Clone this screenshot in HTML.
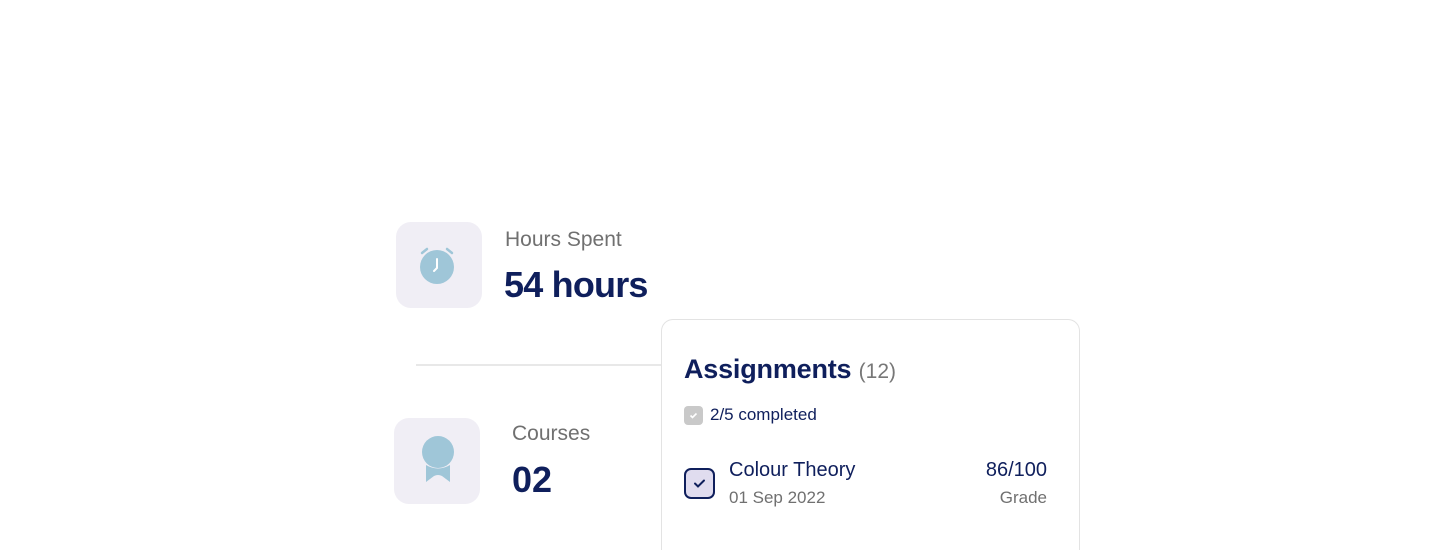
<!DOCTYPE html>
<html><head><style>
*{margin:0;padding:0;box-sizing:border-box}
html,body{width:1440px;height:550px;overflow:hidden}
body{background:#fff;position:relative;font-family:"Liberation Sans",sans-serif}
.a{position:absolute;white-space:nowrap}
.box{position:absolute;width:86px;height:86px;background:#f0eef5;border-radius:15px}
.navy{color:#0f1f5c}
.gray{color:#707070}
</style></head><body>
<div class="box" style="left:396px;top:222px">
<svg width="86" height="86" viewBox="0 0 86 86">
<circle cx="41" cy="45" r="17" fill="#9fc6d8"/>
<path d="M26 31 L31 27 M56 31 L51 27" stroke="#9fc6d8" stroke-width="2.5" stroke-linecap="round"/>
<path d="M41 37 V46 L38 49" stroke="#fff" stroke-width="2" fill="none" stroke-linecap="round"/>
</svg></div>
<div class="a gray" style="left:505px;top:228px;font-size:21px">Hours Spent</div>
<div class="a navy" style="left:504px;top:264px;font-size:36px;font-weight:bold;letter-spacing:-0.8px">54 hours</div>
<div class="a" style="left:416px;top:364px;width:245px;height:2px;background:#e8e8e8"></div>
<div class="box" style="left:394px;top:418px">
<svg width="86" height="86" viewBox="0 0 86 86">
<circle cx="44" cy="34" r="16" fill="#9fc6d8"/>
<path d="M32 47 Q44 54 56 47 V64 L48 58 Q44 56 40 58 L32 64 Z" fill="#9fc6d8"/>
</svg></div>
<div class="a gray" style="left:512px;top:422px;font-size:21px">Courses</div>
<div class="a navy" style="left:512px;top:459px;font-size:36px;font-weight:bold">02</div>
<div class="a" style="left:661px;top:319px;width:419px;height:231px;border:1px solid #e3e3e3;border-bottom:none;border-radius:12px 12px 0 0;background:#fff"></div>
<div class="a navy" style="left:684px;top:354px;font-size:27px;font-weight:bold;letter-spacing:-0.2px">Assignments <span style="font-weight:normal;color:#777;font-size:21px;letter-spacing:0">(12)</span></div>
<div class="a" style="left:684px;top:406px;width:19px;height:19px;background:#c9c9c9;border-radius:4px">
<svg width="19" height="19"><path d="M6.5 9.5 L8.5 11.5 L12.5 7.5" stroke="#fff" stroke-width="1.6" fill="none"/></svg></div>
<div class="a navy" style="left:710px;top:405px;font-size:17px">2/5 completed</div>
<div class="a" style="left:684px;top:468px;width:31px;height:31px;background:#e0dcef;border:2px solid #0f1f5c;border-radius:7px">
<svg width="27" height="27"><path d="M9 13.5 L12 16.5 L18 10.5" stroke="#0f1f5c" stroke-width="2" fill="none" stroke-linecap="round"/></svg></div>
<div class="a navy" style="left:729px;top:459px;font-size:20px">Colour Theory</div>
<div class="a gray" style="left:729px;top:488px;font-size:17px">01 Sep 2022</div>
<div class="a navy" style="right:393px;top:459px;font-size:20px">86/100</div>
<div class="a gray" style="right:393px;top:488px;font-size:17px">Grade</div>
</body></html>
